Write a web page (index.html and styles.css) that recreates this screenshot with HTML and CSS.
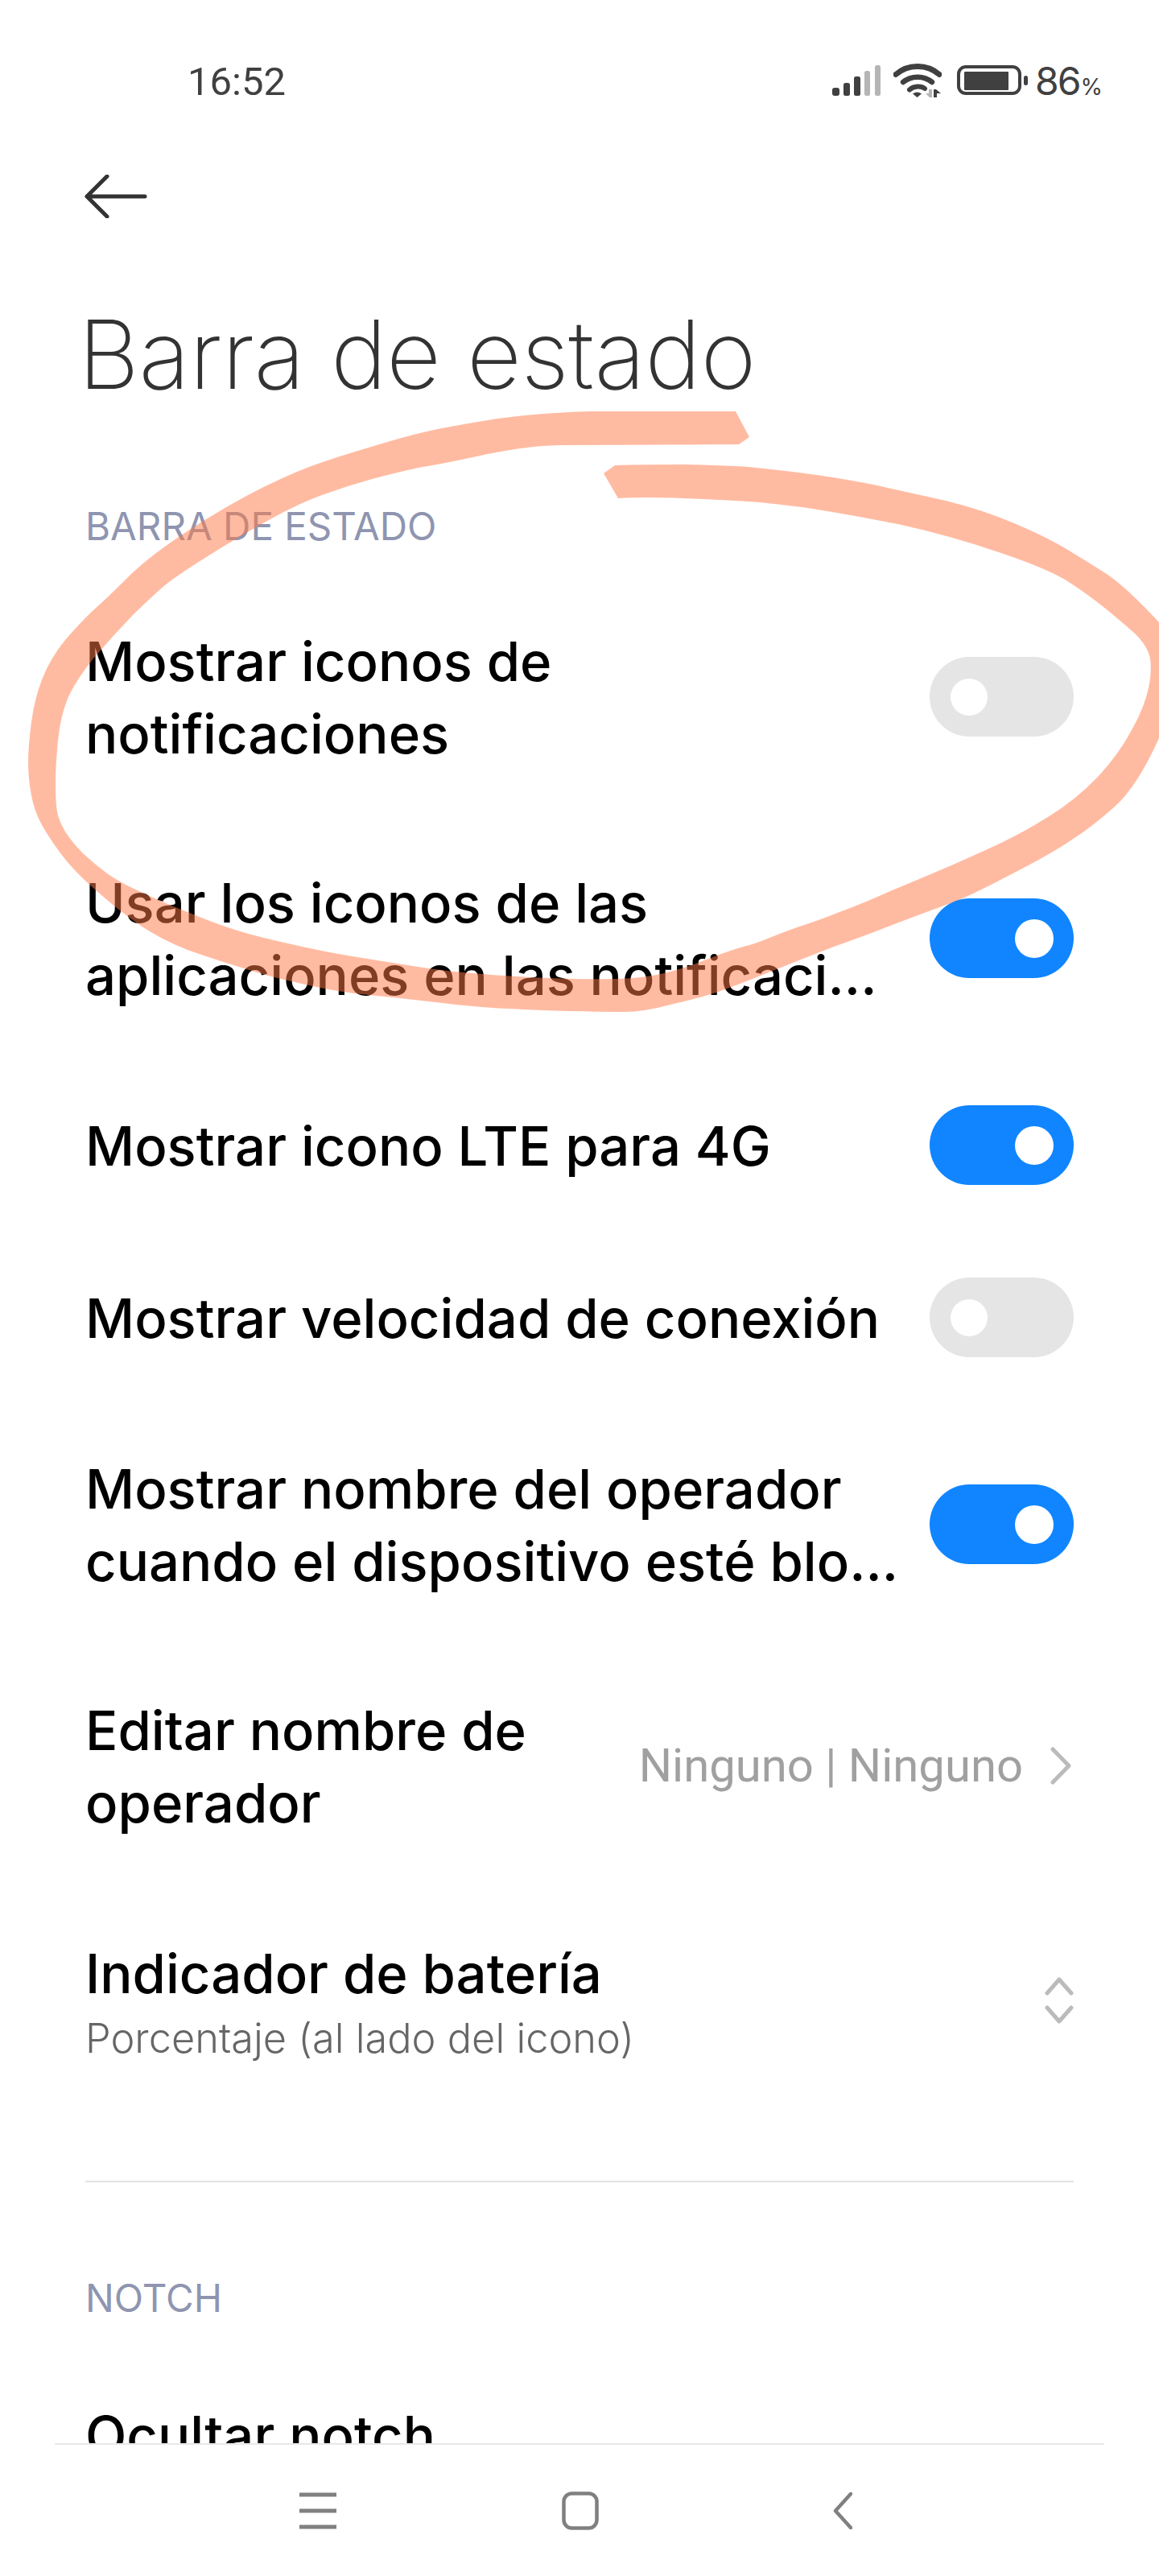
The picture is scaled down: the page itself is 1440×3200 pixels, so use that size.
FILE: index.html
```html
<!DOCTYPE html>
<html lang="es">
<head>
<meta charset="utf-8">
<title>Barra de estado</title>
<link rel="stylesheet" href="styles.css">
</head>
<body>
<div class="phone">
  <div class="screen">
    <header class="status">
      <span class="clock">16:52</span>
      <div class="status-icons">
        <svg class="signal" width="60" height="40" viewBox="0 0 60 40">
          <rect x="0" y="29" width="9" height="10" rx="3" fill="#404040"/>
          <rect x="14" y="23" width="8" height="16" rx="2.500" fill="#404040"/>
          <rect x="27" y="15" width="8" height="24" rx="2.500" fill="#404040"/>
          <rect x="40" y="8" width="7" height="31" rx="2.500" fill="#b5b5b5"/>
          <rect x="53" y="1" width="7" height="38" rx="2.500" fill="#b5b5b5"/>
        </svg>
        <svg class="wifi" width="60" height="44" viewBox="0 0 60 44">
          <path d="M3 14.500C18 1 42 1 57 14.500" fill="none" stroke="#404040" stroke-width="7" stroke-linecap="round"/>
          <path d="M12 24C22 15.500 38 15.500 48 24" fill="none" stroke="#404040" stroke-width="6.500" stroke-linecap="round"/>
          <path d="M20 33.500C25.500 28.500 34.500 28.500 39 32" fill="none" stroke="#404040" stroke-width="6" stroke-linecap="round"/>
          <path d="M24 38.500Q29.500 34.500 35 38.500L29.500 43Z" fill="#404040"/>
          <path d="M44 33H48V43H45L40 38H44Z" fill="#b5b5b5"/>
          <path d="M50 43V33H53L59 38H54V43Z" fill="#404040"/>
        </svg>
        <svg class="battery" width="88" height="38" viewBox="0 0 88 38">
          <rect x="2" y="2" width="76" height="33" rx="9" fill="none" stroke="#404040" stroke-width="4"/>
          <rect x="9" y="8" width="55" height="23" rx="1" fill="#404040"/>
          <rect x="83" y="13" width="5" height="12" rx="2.500" fill="#404040"/>
        </svg>
        <span class="level">86<small>%</small></span>
      </div>
    </header>

    <div class="toolbar">
      <svg class="back" width="78" height="54" viewBox="0 0 78 54">
        <path d="M28 2L3 27L28 52M3 27H75" fill="none" stroke="#333" stroke-width="5" stroke-linecap="round" stroke-linejoin="round"/>
      </svg>
    </div>

    <h1 class="title">Barra de estado</h1>

    <main class="settings">
      <h2 class="section-label">BARRA DE ESTADO</h2>

      <div class="row row-double">
        <div class="row-text">Mostrar iconos de<br>notificaciones</div>
        <span class="switch"></span>
      </div>
      <div class="row row-double">
        <div class="row-text">Usar los iconos de las<br>aplicaciones en las notificaci...</div>
        <span class="switch switch-on"></span>
      </div>
      <div class="row row-single">
        <div class="row-text">Mostrar icono LTE para 4G</div>
        <span class="switch switch-on"></span>
      </div>
      <div class="row row-single">
        <div class="row-text">Mostrar velocidad de conexión</div>
        <span class="switch"></span>
      </div>
      <div class="row row-double">
        <div class="row-text">Mostrar nombre del operador<br>cuando el dispositivo esté blo...</div>
        <span class="switch switch-on"></span>
      </div>
      <div class="row row-double">
        <div class="row-text">Editar nombre de<br>operador</div>
        <div class="row-value">
          <span>Ninguno | Ninguno</span>
          <svg width="26" height="47" viewBox="0 0 26 47">
            <path d="M3 3L23 23.500L3 44" fill="none" stroke="#bbb" stroke-width="5" stroke-linecap="round" stroke-linejoin="round"/>
          </svg>
        </div>
      </div>
      <div class="row row-picker">
        <div class="row-text">Indicador de batería<p class="row-sub">Porcentaje (al lado del icono)</p></div>
        <svg class="updown" width="36" height="58" viewBox="0 0 36 58">
          <path d="M3 20L18 3L33 20M3 38L18 55L33 38" fill="none" stroke="#bbb" stroke-width="5" stroke-linecap="round" stroke-linejoin="round"/>
        </svg>
      </div>

      <hr class="divider">

      <h2 class="section-label section-notch">NOTCH</h2>
      <div class="row row-notch">
        <div class="row-text">Ocultar notch</div>
      </div>
    </main>

    <nav class="navbar">
      <svg width="46" height="46" viewBox="0 0 46 46">
        <path d="M0 3H46M0 23H46M0 43H46" fill="none" stroke="#808080" stroke-width="5"/>
      </svg>
      <svg width="46" height="48" viewBox="0 0 46 48">
        <rect x="2.500" y="2.500" width="41" height="43" rx="10" fill="none" stroke="#808080" stroke-width="4.500"/>
      </svg>
      <svg class="nav-back" width="24" height="46" viewBox="0 0 24 46">
        <path d="M22 2L3 23L22 44" fill="none" stroke="#808080" stroke-width="4.500" stroke-linecap="round" stroke-linejoin="round"/>
      </svg>
    </nav>
  </div>

  <!-- Highlighter circle drawn by hand over the first two options -->
  <svg class="scribble" width="1440" height="1300" viewBox="0 0 1440 1300">
    <path d="M914 511L735 511Q661 513 606 522Q551 531 526 537Q500 543 458 556Q417 568 384 580Q350 593 308 615Q267 637 225 665Q183 693 158 718Q133 743 116 758Q100 773 81 795Q63 817 53 842Q43 867 39 897Q35 927 35 947Q35 967 39 988Q43 1010 55 1030Q67 1050 83 1070Q100 1090 125 1111Q150 1133 175 1150Q200 1167 233 1180Q267 1192 300 1202Q333 1213 375 1222Q417 1232 458 1236Q500 1240 550 1246Q600 1252 633 1253Q667 1255 708 1256Q750 1257 775 1257Q800 1257 833 1248Q867 1240 883 1235Q900 1230 950 1210Q1000 1190 1036 1176Q1073 1163 1106 1150Q1140 1137 1170 1126Q1200 1115 1215 1107Q1230 1100 1268 1080Q1307 1060 1332 1043Q1357 1027 1385 1002Q1413 977 1440 917L1440 773Q1400 730 1375 713Q1350 697 1325 682Q1300 667 1260 650Q1220 633 1175 622Q1130 612 1085 602Q1040 593 1000 588Q960 583 930 580Q900 578 850 577Q800 577 764 578L750 588L768 619Q800 617 850 619Q900 621 930 623Q960 625 1010 632Q1060 640 1120 652Q1179 665 1241 686Q1303 707 1328 723Q1354 740 1376 758Q1399 777 1411 788Q1423 800 1427 811Q1432 823 1428 850Q1423 877 1406 907Q1390 937 1364 965Q1337 993 1305 1013Q1273 1033 1248 1045Q1223 1057 1182 1075Q1140 1093 1106 1107Q1073 1122 1043 1133Q1013 1145 993 1151Q973 1158 956 1165Q940 1172 920 1177Q900 1183 875 1193Q850 1203 825 1209Q800 1215 766 1216Q733 1217 683 1215Q633 1213 600 1210Q567 1208 533 1203Q500 1198 450 1190Q400 1182 358 1172Q317 1163 292 1155Q267 1147 233 1133Q200 1120 175 1108Q150 1097 133 1085Q117 1073 103 1060Q90 1047 81 1033Q73 1020 71 1008Q69 997 69 973Q69 950 72 920Q75 890 84 868Q93 847 116 818Q140 790 166 763Q193 737 205 727Q217 717 250 696Q283 675 325 651Q367 627 400 615Q433 603 466 594Q500 585 525 580Q551 576 606 564Q661 553 698 553L918 552L931 543Z"/>
  </svg>
</div>
</body>
</html>
```

FILE: styles.css
```css
* {
  box-sizing: border-box;
}

html,
body {
  margin: 0;
  padding: 0;
  background: #fff;
}

.phone {
  position: relative;
  width: 1440px;
  height: 3200px;
  overflow: hidden;
  font-family: Inter, "Noto Sans", sans-serif;
  color: #000;
}

.screen {
  display: flex;
  flex-direction: column;
  height: 100%;
}

/* System status bar */
.status {
  display: flex;
  justify-content: space-between;
  align-items: center;
  height: 200px;
  padding: 0 70px 0 233px;
  flex: none;
  color: #404040;
  font-family: Roboto, sans-serif;
}

.clock {
  padding-top: 2px;
  font-size: 49px;
  line-height: 1;
}

.status-icons {
  display: flex;
  align-items: center;
}

.wifi {
  margin-left: 16px;
}

.battery {
  margin-left: 19px;
}

.level {
  margin-left: 9px;
  padding-top: 2px;
  font-family: Inter, sans-serif;
  font-size: 48px;
  letter-spacing: -2px;
  line-height: 1;
}

.level small {
  margin-left: 1px;
  font-size: 28px;
  letter-spacing: 0;
}

/* Back button and page heading */
.toolbar {
  display: flex;
  align-items: center;
  flex: none;
  height: 88px;
  padding-left: 105px;
}

.title {
  flex: none;
  margin: 0;
  padding: 82px 0 0 97px;
  font-size: 118px;
  font-weight: 200;
  letter-spacing: -0.6px;
  line-height: 140px;
  color: #333;
}

.settings {
  flex: 1;
  min-height: 0;
  overflow: hidden;
  padding: 108px 106px 0;
}

.section-label {
  margin: 0 0 27px;
  padding-top: 2px;
  font-size: 47.500px;
  font-weight: 400;
  line-height: 68px;
  color: #8f95b0;
}

.row {
  display: flex;
  justify-content: space-between;
  align-items: center;
}

.row-double {
  height: 300px;
}

.row-single {
  height: 214px;
}

.row-picker {
  height: 284px;
}

.row-notch {
  height: 270px;
}

.row-text {
  padding-top: 4px;
  font-size: 67px;
  font-weight: 500;
  line-height: 90px;
  white-space: nowrap;
}

.row-sub {
  margin: 0;
  font-size: 50.500px;
  font-weight: 300;
  line-height: 70px;
  color: #666;
}

.switch {
  position: relative;
  flex: none;
  width: 179px;
  height: 99px;
  border-radius: 50px;
  background: #e5e5e5;
}

.switch::after {
  content: "";
  position: absolute;
  top: 27px;
  left: 26px;
  width: 46px;
  height: 46px;
  border-radius: 50%;
  background: #fff;
}

.switch-on {
  background: #1085ff;
}

.switch-on::after {
  left: 106px;
  top: 26px;
  width: 48px;
  height: 48px;
}

.row-value {
  display: flex;
  align-items: center;
  gap: 34px;
  margin-right: 3px;
  font-family: Roboto, sans-serif;
  font-size: 58px;
  font-weight: 400;
  color: #a0a0a0;
}

.updown {
  flex: none;
}

.divider {
  height: 2px;
  margin: 82px 0 0;
  border: 0;
  background: #e3e3e3;
}

.section-notch {
  margin-top: 108px;
  margin-bottom: 0;
}

/* Navigation keys */
.navbar {
  flex: none;
  display: flex;
  align-items: center;
  gap: 280px;
  height: 165px;
  margin: 0 68px;
  padding-left: 304px;
  border-top: 2px solid #e8e8e8;
  background: #fff;
}

.nav-back {
  margin-left: 11px;
}

.scribble {
  position: absolute;
  top: 0;
  left: 0;
  fill: #ff7a47;
  opacity: 0.5;
  pointer-events: none;
}
```
